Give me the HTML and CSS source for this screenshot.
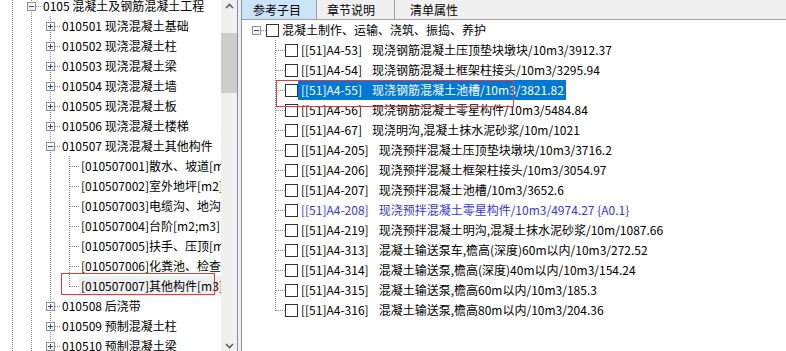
FILE: index.html
```html
<!DOCTYPE html>
<html lang="zh-CN">
  <head>
    <meta charset="UTF-8" />
    <title>参考子目</title>
    <link rel="stylesheet" href="styles.css">
  </head>
  <body>
    <div class="app">
      <div class="left-pane">
        <div class="tree-view list-tree">
          <div class="row"><span class="guide"></span><span class="elbow"><span class="expander minus"></span></span><span class="label">0105 混凝土及钢筋混凝土工程</span></div>
          <div class="row"><span class="guide"></span><span class="guide"></span><span class="elbow"><span class="expander plus"></span></span><span class="label">010501 现浇混凝土基础</span></div>
          <div class="row"><span class="guide"></span><span class="guide"></span><span class="elbow"><span class="expander plus"></span></span><span class="label">010502 现浇混凝土柱</span></div>
          <div class="row"><span class="guide"></span><span class="guide"></span><span class="elbow"><span class="expander plus"></span></span><span class="label">010503 现浇混凝土梁</span></div>
          <div class="row"><span class="guide"></span><span class="guide"></span><span class="elbow"><span class="expander plus"></span></span><span class="label">010504 现浇混凝土墙</span></div>
          <div class="row"><span class="guide"></span><span class="guide"></span><span class="elbow"><span class="expander plus"></span></span><span class="label">010505 现浇混凝土板</span></div>
          <div class="row"><span class="guide"></span><span class="guide"></span><span class="elbow"><span class="expander plus"></span></span><span class="label">010506 现浇混凝土楼梯</span></div>
          <div class="row"><span class="guide"></span><span class="guide"></span><span class="elbow"><span class="expander minus"></span></span><span class="label">010507 现浇混凝土其他构件</span></div>
          <div class="row"><span class="guide"></span><span class="guide"></span><span class="guide"></span><span class="elbow"></span><span class="label">[010507001]散水、坡道[m2]</span></div>
          <div class="row"><span class="guide"></span><span class="guide"></span><span class="guide"></span><span class="elbow"></span><span class="label">[010507002]室外地坪[m2]</span></div>
          <div class="row"><span class="guide"></span><span class="guide"></span><span class="guide"></span><span class="elbow"></span><span class="label">[010507003]电缆沟、地沟[m]</span></div>
          <div class="row"><span class="guide"></span><span class="guide"></span><span class="guide"></span><span class="elbow"></span><span class="label">[010507004]台阶[m2;m3]</span></div>
          <div class="row"><span class="guide"></span><span class="guide"></span><span class="guide"></span><span class="elbow"></span><span class="label">[010507005]扶手、压顶[m;m3]</span></div>
          <div class="row"><span class="guide"></span><span class="guide"></span><span class="guide"></span><span class="elbow"></span><span class="label">[010507006]化粪池、检查井[m3;座]</span></div>
          <div class="row"><span class="guide"></span><span class="guide"></span><span class="guide"></span><span class="elbow last"></span><span class="label inactive">[010507007]其他构件[m3]</span></div>
          <div class="row"><span class="guide"></span><span class="guide"></span><span class="elbow"><span class="expander plus"></span></span><span class="label">010508 后浇带</span></div>
          <div class="row"><span class="guide"></span><span class="guide"></span><span class="elbow"><span class="expander plus"></span></span><span class="label">010509 预制混凝土柱</span></div>
          <div class="row"><span class="guide"></span><span class="guide"></span><span class="elbow"><span class="expander plus"></span></span><span class="label">010510 预制混凝土梁</span></div>
          <div class="mark mark-left"></div>
        </div>
        <div class="scrollbar">
          <div class="sb-btn">
            <svg width="9" height="6" viewBox="0 0 9 6"><polyline points="1,5 4.5,1.5 8,5" fill="none" stroke="#606060" stroke-width="1.6"/></svg>
          </div>
          <div class="sb-thumb"></div>
          <div class="sb-track"></div>
          <div class="sb-btn">
            <svg width="9" height="6" viewBox="0 0 9 6"><polyline points="1,1 4.5,4.5 8,1" fill="none" stroke="#606060" stroke-width="1.6"/></svg>
          </div>
        </div>
      </div>

      <div class="splitter"></div>

      <div class="right-pane">
        <div class="tabs">
          <div class="tab tab-ref active">参考子目</div>
          <div class="tab tab-note">章节说明</div>
          <div class="tab tab-attr">清单属性</div>
        </div>
        <div class="tree-view quota-tree">
          <div class="row"><span class="elbow solo"><span class="expander minus"></span></span><span class="check"></span><span class="label">混凝土制作、运输、浇筑、振捣、养护</span></div>
          <div class="row"><span class="indent"></span><span class="elbow"></span><span class="check"></span><span class="label"><span class="code">[[51]A4-53]</span>现浇钢筋混凝土压顶垫块墩块/10m3/3912.37</span></div>
          <div class="row"><span class="indent"></span><span class="elbow"></span><span class="check"></span><span class="label"><span class="code">[[51]A4-54]</span>现浇钢筋混凝土框架柱接头/10m3/3295.94</span></div>
          <div class="row"><span class="indent"></span><span class="elbow"></span><span class="check"></span><span class="label selected"><span class="code">[[51]A4-55]</span>现浇钢筋混凝土池槽/10m3/3821.82</span></div>
          <div class="row"><span class="indent"></span><span class="elbow"></span><span class="check"></span><span class="label"><span class="code">[[51]A4-56]</span>现浇钢筋混凝土零星构件/10m3/5484.84</span></div>
          <div class="row"><span class="indent"></span><span class="elbow"></span><span class="check"></span><span class="label"><span class="code">[[51]A4-67]</span>现浇明沟,混凝土抹水泥砂浆/10m/1021</span></div>
          <div class="row"><span class="indent"></span><span class="elbow"></span><span class="check"></span><span class="label"><span class="code">[[51]A4-205]</span>现浇预拌混凝土压顶垫块墩块/10m3/3716.2</span></div>
          <div class="row"><span class="indent"></span><span class="elbow"></span><span class="check"></span><span class="label"><span class="code">[[51]A4-206]</span>现浇预拌混凝土框架柱接头/10m3/3054.97</span></div>
          <div class="row"><span class="indent"></span><span class="elbow"></span><span class="check"></span><span class="label"><span class="code">[[51]A4-207]</span>现浇预拌混凝土池槽/10m3/3652.6</span></div>
          <div class="row"><span class="indent"></span><span class="elbow"></span><span class="check"></span><span class="label linked"><span class="code">[[51]A4-208]</span>现浇预拌混凝土零星构件/10m3/4974.27 {A0.1}</span></div>
          <div class="row"><span class="indent"></span><span class="elbow"></span><span class="check"></span><span class="label"><span class="code">[[51]A4-219]</span>现浇预拌混凝土明沟,混凝土抹水泥砂浆/10m/1087.66</span></div>
          <div class="row"><span class="indent"></span><span class="elbow"></span><span class="check"></span><span class="label"><span class="code">[[51]A4-313]</span>混凝土输送泵车,檐高(深度)60m以内/10m3/272.52</span></div>
          <div class="row"><span class="indent"></span><span class="elbow"></span><span class="check"></span><span class="label"><span class="code">[[51]A4-314]</span>混凝土输送泵,檐高(深度)40m以内/10m3/154.24</span></div>
          <div class="row"><span class="indent"></span><span class="elbow"></span><span class="check"></span><span class="label"><span class="code">[[51]A4-315]</span>混凝土输送泵,檐高60m以内/10m3/185.3</span></div>
          <div class="row"><span class="indent"></span><span class="elbow last"></span><span class="check"></span><span class="label"><span class="code">[[51]A4-316]</span>混凝土输送泵,檐高80m以内/10m3/204.36</span></div>
          <div class="mark mark-right"></div>
        </div>
      </div>
    </div>
  </body>
</html>
```

FILE: styles.css
```css
body {
  margin: 0;
  padding: 0;
  font-family: "Noto Sans CJK SC", "Liberation Sans", sans-serif;
  font-size: 12px;
  color: #000;
  background: #f0f0f0;
}

.app {
  display: flex;
  height: 351px;
  overflow: hidden;
}

/* left: bill list tree */
.left-pane {
  display: flex;
  width: 237px;
  flex: none;
  border-right: 1px solid #8e8e98;
  background: #fff;
}

.tree-view {
  position: relative;
  overflow: hidden;
  white-space: nowrap;
}

.list-tree {
  width: 221px;
  flex: none;
  padding-left: 3px;
  box-sizing: border-box;
}

.list-tree .row:first-child {
  margin-top: -4px;
}

.row {
  display: flex;
  align-items: center;
  height: 20px;
}

.guide,
.indent {
  width: 19px;
  height: 20px;
  flex: none;
}

.guide {
  background: linear-gradient(#8c8c8c 50%, transparent 50%) 9px 0 / 1px 2px repeat-y;
}

.elbow {
  position: relative;
  width: 19px;
  height: 20px;
  flex: none;
  display: flex;
  justify-content: center;
  align-items: flex-start;
}

.elbow::before {
  content: "";
  position: absolute;
  left: 9px;
  top: 0;
  width: 1px;
  height: 20px;
  background: linear-gradient(#8c8c8c 50%, transparent 50%) 0 0 / 1px 2px repeat-y;
}

.elbow.last::before {
  height: 11px;
}

.elbow.solo::before {
  display: none;
}

.elbow::after {
  content: "";
  position: absolute;
  left: 10px;
  top: 10px;
  width: 9px;
  height: 1px;
  background: linear-gradient(to right, #8c8c8c 50%, transparent 50%) 0 0 / 2px 1px repeat-x;
}

.expander {
  position: relative;
  z-index: 1;
  width: 9px;
  height: 9px;
  margin-top: 6px;
  box-sizing: border-box;
  border: 1px solid #919191;
  background: linear-gradient(#ffffff, #ececec);
}

.expander::before {
  content: "";
  position: absolute;
  left: 1px;
  top: 3px;
  width: 5px;
  height: 1px;
  background: #2d4f86;
}

.expander.plus::after {
  content: "";
  position: absolute;
  left: 3px;
  top: 1px;
  width: 1px;
  height: 5px;
  background: #2d4f86;
}

.label {
  line-height: 20px;
  padding: 0 2px;
}

.label.inactive {
  background: #f0f0f0;
}

.mark {
  position: absolute;
  box-sizing: border-box;
  border: 1px solid #e5393b;
  pointer-events: none;
}

.mark-left {
  left: 61px;
  top: 273px;
  width: 154px;
  height: 22px;
}

/* scrollbar */
.scrollbar {
  width: 16px;
  flex: none;
  display: flex;
  flex-direction: column;
  background: #f0f0f0;
}

.sb-btn {
  height: 11px;
  flex: none;
  display: flex;
  align-items: center;
  justify-content: center;
}

.sb-thumb {
  height: 60px;
  margin-top: 22px;
  flex: none;
  background: #cdcdcd;
}

.sb-track {
  flex: 1;
}

.splitter {
  width: 3px;
  flex: none;
  background: #f0f0f0;
}

/* right: quota tree */
.right-pane {
  flex: 1;
  display: flex;
  flex-direction: column;
  border-left: 1px solid #8e8e98;
  background: #fff;
}

.tabs {
  display: flex;
  height: 19px;
  background: #f0f0f0;
  border-bottom: 1px solid #a0a0a0;
}

.tab {
  height: 19px;
  line-height: 19px;
  box-sizing: border-box;
  color: #000;
}

.tab.active {
  background: #cce4f7;
}

.tab-ref {
  width: 75px;
  padding-left: 11px;
  border-right: 1px solid #a0a0a0;
}

.tab-note {
  width: 78px;
  padding-left: 10px;
  border-right: 1px solid #a0a0a0;
}

.tab-attr {
  padding-left: 15px;
}

.quota-tree {
  flex: 1;
  padding-left: 5px;
}

.check {
  width: 13px;
  height: 13px;
  flex: none;
  box-sizing: border-box;
  border: 1px solid #333;
  background: #fff;
}

.quota-tree .label {
  padding: 0 2px 0 3px;
}

.code {
  margin-right: 10px;
}

.label.selected {
  background: #0078d7;
  color: #fff;
}

.label.linked {
  color: #3535f0;
}

.mark-right {
  left: 34px;
  top: 60px;
  width: 238px;
  height: 27px;
}
```
